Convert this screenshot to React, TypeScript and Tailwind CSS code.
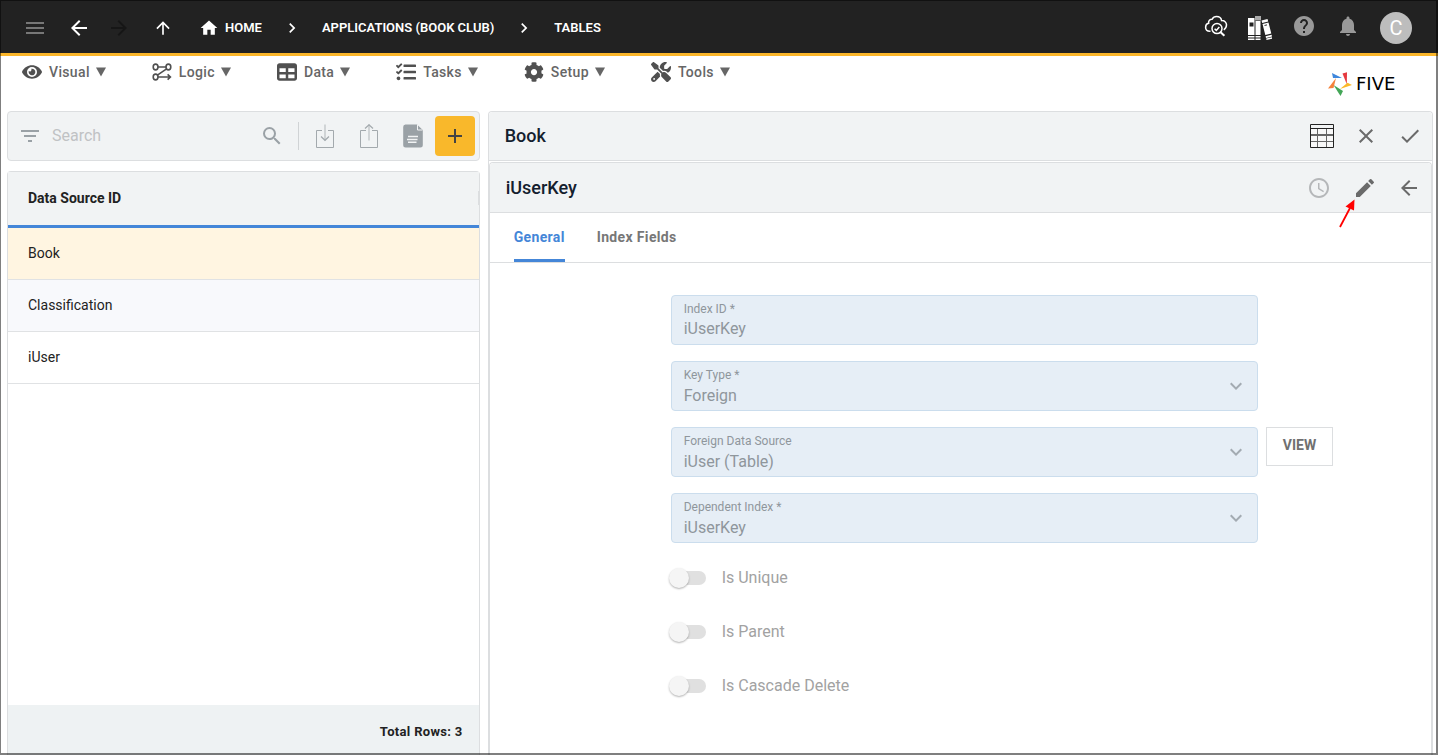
import { useId } from 'react';
import type { ReactNode } from 'react';
import clsx from 'clsx';
import { FaCog, FaEye, FaTasks } from 'react-icons/fa';
import { FaScrewdriverWrench, FaTable } from 'react-icons/fa6';
import {
	MdArrowBack,
	MdArrowForward,
	MdArrowUpward,
	MdCheck,
	MdChevronRight,
	MdClose,
	MdEdit,
	MdExpandMore,
	MdFilterList,
	MdHelp,
	MdHome,
	MdMenu,
	MdNotifications,
	MdSchedule,
	MdSearch
} from 'react-icons/md';

const IconLogic = () => (
	<svg className="h-5 w-5" fill="none" stroke="currentColor" strokeWidth="1.6" viewBox="0 0 20 20">
		<ellipse cx="3.6" cy="5" rx="2.4" ry="2.9" />
		<ellipse cx="16.4" cy="5" rx="2.4" ry="2.9" />
		<ellipse cx="3.6" cy="15" rx="2.4" ry="2.9" />
		<path d="M6 5h8M14.6 6.8 5.4 13.2M6 15h12M15.6 12.4l2.8 2.6-2.8 2.6" />
	</svg>
);

const IconCloudSearch = () => (
	<svg className="h-6 w-6" fill="none" stroke="currentColor" strokeWidth="1.5" viewBox="0 0 24 24">
		<path d="M6.5 17.2H5.8C3.2 17.2 1.6 15.4 1.6 13.2c0-2 1.3-3.5 3-3.9C4.3 6.8 6 5.2 8 5.3 9 3.5 10.6 2.6 12.6 2.6c2.6 0 4.6 1.6 5 4 2.8-.2 4.9 1.8 4.9 4.2 0 2.4-1 4-2.7 5" />
		<circle cx="13" cy="14.6" r="5" />
		<path d="m10.6 14.7 1.7 1.7 3-3.4" />
		<path d="m16.6 18.2 3.8 3.6" strokeWidth="2" />
	</svg>
);

const IconBooks = () => (
	<svg className="h-6 w-6" fill="currentColor" viewBox="0 0 24 24">
		<path d="M0 2h6.500v17H0zM0 20h6.500v1.500H0zM0 22.500h6.500V24H0z" />
		<path d="M1.500 6.500h4v4h-4z" fill="#222" />
		<path d="M7.500 5h5v14h-5zM7.500 20h5v1.500h-5zM7.500 22.500h5V24h-5z" />
		<path d="M7 0h6v4.500H7z" fill="#aaa" />
		<path d="m13.500 4.500 6-1.500.7 2.500-6 1.500zM14.500 8l6-1.500 2.800 11-6 1.500zM17.600 20.200l6-1.500.4 1.700-6 1.500zM18.200 22.600l5.800-1.400v1.600L18.500 24z" />
		<path d="m16.500 9.500 2.500-.6" stroke="#222" strokeWidth=".9" />
	</svg>
);

const IconTransfer = ({ up }: { up?: boolean }) => (
	<svg className="h-6 w-5" fill="none" stroke="currentColor" viewBox="0 0 20 24">
		<path d="M7 6.500H1.500v17h17v-17H13" stroke="#a3a9ad" />
		<path d="M10 .5v16" stroke="#c9cccf" strokeWidth="1.6" />
		<path d={up ? 'M6 4.500 10 .8l4 3.700' : 'm6 12.500 4 3.800 4-3.800'} stroke="#a3a9ad" strokeWidth="1.2" />
	</svg>
);

const IconDocument = () => (
	<svg className="h-6 w-5" viewBox="0 0 20 24">
		<path d="M3 .5h11L19.800 6v15a2.500 2.500 0 0 1-2.500 2.500H2.700A2.500 2.500 0 0 1 .2 21V3A2.500 2.500 0 0 1 3 .5z" fill="#9aa1a6" />
		<path d="M14.500.8V6h5" fill="none" stroke="#f1f3f4" />
		<path d="M5 12.500h10M4 15.500h10.500M5 18.300h8.500" stroke="#f1f3f4" strokeWidth="1.4" />
	</svg>
);

const IconGrid = () => (
	<svg className="h-6 w-6" fill="none" viewBox="0 0 24 24">
		<path d="M1 5h22v18H1z" fill="#f8f8f8" />
		<path d="M1 10.500h22M1 11.500h22M1 17.500h22M7.500 5v18M16.500 5v18" stroke="#666" />
		<path d="M.5.5h23v23H.5zM1 4.500h22" stroke="#222" />
	</svg>
);

const LogoMark = () => (
	<svg className="h-6 w-6" viewBox="0 0 24 24">
		<path d="m4 1 10 5-9 0z" fill="#3f87dc" />
		<path d="m14.500 1.500 4.500-1.300-.2 12z" fill="#e5393f" />
		<path d="m24 13-4.500-2.300L12 17z" fill="#fbb829" />
		<path d="M12.500 24 15 19 5.500 13z" fill="#43a657" />
		<path d="M0 16.500 5.500 16 8 6z" fill="#f5823b" />
	</svg>
);

const crumbs = ['APPLICATIONS (BOOK CLUB)', 'TABLES'];

const menus: { label: string; icon: ReactNode }[] = [
	{ label: 'Visual', icon: <FaEye className="size-5" /> },
	{ label: 'Logic', icon: <IconLogic /> },
	{ label: 'Data', icon: <FaTable className="size-5" /> },
	{ label: 'Tasks', icon: <FaTasks className="size-5" /> },
	{ label: 'Setup', icon: <FaCog className="size-5" /> },
	{ label: 'Tools', icon: <FaScrewdriverWrench className="size-5" /> }
];

const rows = [
	{ name: 'Book', className: 'bg-[#fff5e1]' },
	{ name: 'Classification', className: 'bg-[#f8f9fc]' },
	{ name: 'iUser', className: 'bg-white' }
];

interface IconButtonProps {
	label: string;
	className?: string;
	children: ReactNode;
}

const IconButton = ({ label, className, children }: IconButtonProps) => (
	<button
		aria-label={label}
		className={clsx('flex h-10 w-11 shrink-0 items-center justify-center', className)}
		type="button"
	>
		{children}
	</button>
);

const TopBar = () => (
	<header className="flex h-14 items-center border-b-3 border-[#fbb62a] bg-[#222] pt-0.5 pr-[26px] pl-[13px] text-white">
		<IconButton className="text-[#777]" label="Menu">
			<MdMenu className="size-6" />
		</IconButton>
		<IconButton label="Back">
			<MdArrowBack className="size-6" />
		</IconButton>
		<IconButton className="-ml-1 text-[#161616]" label="Forward">
			<MdArrowForward className="size-6" />
		</IconButton>
		<IconButton label="Up">
			<MdArrowUpward className="size-5" />
		</IconButton>
		<nav className="ml-3.5 flex items-center text-[13px] font-semibold">
			<a className="flex items-center gap-1.5" href="#home">
				<MdHome className="size-5" />
				HOME
			</a>
			{crumbs.map((crumb) => (
				<div key={crumb} className="flex items-center">
					<MdChevronRight className="mx-5 size-5" />
					<a href="#crumb">{crumb}</a>
				</div>
			))}
		</nav>
		<div className="ml-auto flex items-center">
			<IconButton className="pb-1" label="Inspect">
				<IconCloudSearch />
			</IconButton>
			<IconButton label="Library">
				<IconBooks />
			</IconButton>
			<IconButton className="pb-1 text-[#999]" label="Help">
				<MdHelp className="size-6" />
			</IconButton>
			<IconButton className="pb-1 text-[#999]" label="Notifications">
				<MdNotifications className="size-6" />
			</IconButton>
			<button className="ml-2.5 size-8 rounded-full bg-[#bdbdbd] text-xl leading-8" type="button">
				C
			</button>
		</div>
	</header>
);

const MenuBar = () => (
	<div className="flex h-[55px] items-start justify-between pr-5 pl-[22px]">
		<nav className="flex gap-[46px] pt-1.5 text-sm font-medium text-[#666]">
			{menus.map(({ label, icon }) => (
				<button key={label} className="flex items-center gap-[7px] tracking-wide" type="button">
					<span className="text-[#505050]">{icon}</span>
					<span className="flex items-center gap-1.5">
						{label}
						<svg className="h-2.5 w-2.5" fill="currentColor" viewBox="0 0 10 10">
							<path d="M0 .5h10L5 9.500z" />
						</svg>
					</span>
				</button>
			))}
		</nav>
		<a className="flex w-[90px] items-center gap-1 pt-4 text-black" href="#five">
			<LogoMark />
			<span className="font-['DejaVu_Sans'] text-lg leading-6">FIVE</span>
		</a>
	</div>
);

const SourceList = () => (
	<section className="flex flex-col gap-2.5">
		<div className="flex h-[50px] items-center rounded border border-[#dcdee0] bg-[#f1f3f4] pr-1 text-[#9aa1a6]">
			<IconButton label="Filter">
				<MdFilterList className="size-6" />
			</IconButton>
			<input
				aria-label="Search"
				className="min-w-0 flex-1 bg-transparent text-base outline-none placeholder:text-[#c0c2c4]"
				placeholder="Search"
				type="text"
			/>
			<IconButton label="Run search">
				<MdSearch className="size-6" />
			</IconButton>
			<span className="mx-1 h-7 w-px bg-[#d0d3d5]" />
			<IconButton label="Import">
				<IconTransfer />
			</IconButton>
			<IconButton label="Export">
				<IconTransfer up />
			</IconButton>
			<IconButton label="Document">
				<IconDocument />
			</IconButton>
			<button
				aria-label="Add"
				className="flex size-10 shrink-0 items-center justify-center rounded bg-[#f9b82b] text-[#444]"
				type="button"
			>
				<svg className="size-6" stroke="currentColor" strokeWidth="2" viewBox="0 0 24 24">
					<path d="M12 5v14M5 12h14" />
				</svg>
			</button>
		</div>
		<div className="flex flex-1 flex-col rounded-t border-x border-t border-[#dcdee0] text-sm text-[#222]">
			<table className="w-full border-separate border-spacing-0 text-left">
				<thead>
					<tr className="bg-[#f1f3f4]">
						<th className="h-14 border-b-3 border-[#4486d8] pb-0.5 pl-5 font-bold">
							<div className="flex items-center justify-between">
								Data Source ID
								<span className="h-3.5 w-px bg-[#dcdee0]" />
							</div>
						</th>
					</tr>
				</thead>
				<tbody>
					{rows.map(({ name, className }) => (
						<tr key={name} className={className}>
							<td className="h-13 border-b border-[#e0e2e4] pb-0.5 pl-5">{name}</td>
						</tr>
					))}
				</tbody>
			</table>
			<div className="mt-auto flex h-[50px] items-center justify-end bg-[#eef2f3] pt-1 pr-4 text-[13px] font-bold tracking-wide">
				Total Rows: 3
			</div>
		</div>
	</section>
);

interface FieldProps {
	label: string;
	value: string;
	select?: boolean;
	children?: ReactNode;
}

const Field = ({ label, value, select, children }: FieldProps) => {
	const id = useId();

	return (
		<div className="grid grid-cols-[1fr_165px] items-start gap-2">
			<div className="relative flex h-[50px] flex-col rounded border border-[#cbdded] bg-[#e6eef6] px-3 pt-[5px] text-[#8f969c]">
				<label className="text-xs leading-4" htmlFor={id}>
					{label}
				</label>
				{select ? (
					<>
						<select
							disabled
							className="h-[26px] w-full appearance-none bg-transparent text-base leading-6 opacity-100"
							defaultValue={value}
							id={id}
						>
							<option>{value}</option>
						</select>
						<MdExpandMore className="pointer-events-none absolute top-3 right-[9px] size-6 text-[#a3abb2]" />
					</>
				) : (
					<input disabled className="h-6 w-full bg-transparent text-base" defaultValue={value} id={id} />
				)}
			</div>
			{children}
		</div>
	);
};

const Toggle = ({ label }: { label: string }) => (
	<label className="flex h-[54px] items-center gap-4 text-base text-[#a2a2a2]">
		<span className="relative flex h-5 w-[37px] items-center justify-end">
			<input disabled className="h-3.5 w-[34px] appearance-none rounded-full bg-[#e0e0e0]" role="switch" type="checkbox" />
			<span className="absolute top-0 left-0 size-5 rounded-full bg-[#f5f5f5] shadow-[0_1px_2px_rgba(0,0,0,0.3)]" />
		</span>
		{label}
	</label>
);

const Detail = () => (
	<section className="flex flex-col rounded-t border-x border-t border-[#dcdee0]">
		<div className="flex h-[49px] items-center justify-between rounded-t border-b border-[#dcdee0] bg-[#f1f3f4] pl-4">
			<h1 className="text-lg font-medium text-[#14202e]">Book</h1>
			<div className="flex text-[#6a6a6a]">
				<IconButton label="Table view">
					<IconGrid />
				</IconButton>
				<IconButton label="Cancel">
					<MdClose className="size-6" />
				</IconButton>
				<IconButton label="Save">
					<MdCheck className="size-6" />
				</IconButton>
			</div>
		</div>
		<div className="mt-px flex flex-1 flex-col rounded-t border-x border-t border-[#dcdee0]">
			<div className="relative flex h-[50px] items-center justify-between rounded-t border-b border-[#dcdee0] bg-[#f1f3f4] pl-4">
				<h2 className="text-lg font-medium text-[#14202e]">iUserKey</h2>
				<div className="flex text-[#6a6a6a]">
					<IconButton className="pr-1 text-[#b5b7b9]" label="History">
						<MdSchedule className="size-6" />
					</IconButton>
					<IconButton label="Edit">
						<MdEdit className="size-6" />
					</IconButton>
					<IconButton label="Return">
						<MdArrowBack className="size-6" />
					</IconButton>
				</div>
				<svg className="absolute top-[35px] right-[74px] h-8 w-5" fill="none" viewBox="0 0 20 32">
					<path d="M3 29 13 10" stroke="#f00" strokeWidth="1.8" />
					<path d="M17.500 1.500 8.500 8.500l8.500 4z" fill="#f00" />
				</svg>
			</div>
			<div className="flex h-[50px] gap-8 border-b border-[#dcdee0] pl-6 text-sm font-bold tracking-wide" role="tablist">
				<button
					aria-selected="true"
					className="border-b-3 border-[#4486d8] pt-0.5 text-[#4486d8]"
					role="tab"
					type="button"
				>
					General
				</button>
				<button
					aria-selected="false"
					className="border-b-3 border-transparent pt-0.5 text-[#777]"
					role="tab"
					type="button"
				>
					Index Fields
				</button>
			</div>
			<form className="flex flex-col gap-4 pt-8 pl-[181px]">
				<Field label="Index ID *" value="iUserKey" />
				<Field select label="Key Type *" value="Foreign" />
				<Field select label="Foreign Data Source" value="iUser (Table)">
					<button
						className="h-[39px] w-[67px] border border-[#dcdee0] pb-1 text-sm font-bold text-[#707070]"
						type="button"
					>
						VIEW
					</button>
				</Field>
				<Field select label="Dependent Index *" value="iUserKey" />
				<div className="-mt-2 -ml-0.5">
					<Toggle label="Is Unique" />
					<Toggle label="Is Parent" />
					<Toggle label="Is Cascade Delete" />
				</div>
			</form>
		</div>
	</section>
);

export default function App() {
	return (
		<div className="relative flex min-h-screen flex-col bg-white font-[Roboto,sans-serif]">
			<TopBar />
			<MenuBar />
			<main className="grid flex-1 grid-cols-[minmax(0,1fr)_minmax(0,2fr)] gap-2 pr-[5px] pl-[7px]">
				<SourceList />
				<Detail />
			</main>
			<div className="pointer-events-none absolute inset-0 border-t border-r-2 border-b-2 border-l border-black/50" />
		</div>
	);
}
